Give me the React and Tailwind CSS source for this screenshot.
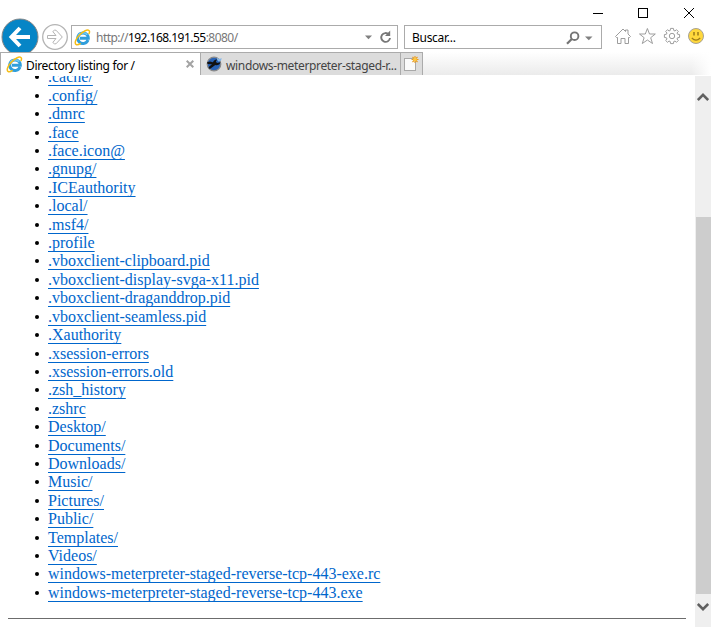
import React from "react";

const files = [
  ".cache/",
  ".config/",
  ".dmrc",
  ".face",
  ".face.icon@",
  ".gnupg/",
  ".ICEauthority",
  ".local/",
  ".msf4/",
  ".profile",
  ".vboxclient-clipboard.pid",
  ".vboxclient-display-svga-x11.pid",
  ".vboxclient-draganddrop.pid",
  ".vboxclient-seamless.pid",
  ".Xauthority",
  ".xsession-errors",
  ".xsession-errors.old",
  ".zsh_history",
  ".zshrc",
  "Desktop/",
  "Documents/",
  "Downloads/",
  "Music/",
  "Pictures/",
  "Public/",
  "Templates/",
  "Videos/",
  "windows-meterpreter-staged-reverse-tcp-443-exe.rc",
  "windows-meterpreter-staged-reverse-tcp-443.exe",
];

function IELogo({ className }) {
  return (
    <svg className={className} width="17" height="17" viewBox="0 0 17 17" fill="none">
      <path d="M14 11A5.3 5.3 0 1 1 14.3 9.3H6" stroke="#2f9edb" strokeWidth="3" />
      <path d="M13.2 5.8A5.4 5.4 0 0 0 4.2 6.8" stroke="#6fcbf5" strokeWidth="1.6" />
      <path
        d="M2.2 15.6C.2 14.4 1.6 10.3 5 6.6C8.7 2.5 13.3.2 14.9 1.5C15.9 2.3 15.4 4 14.8 5.1M2.2 15.6C3.2 16.1 5 15.4 6.6 14.3"
        stroke="#f5bd16"
        strokeWidth="1.5"
      />
    </svg>
  );
}

function TitleBar() {
  return (
    <div className="flex h-[18px] items-end justify-end pr-[17px]">
      <svg width="101" height="10" viewBox="0 0 101 10" fill="none" stroke="#000" strokeWidth="1">
        <path d="M0 5.5H10" />
        <rect x="45.5" y=".5" width="9" height="9" />
        <path d="M91 0L101 10M101 0L91 10" />
      </svg>
    </div>
  );
}

function NavBar() {
  return (
    <div className="flex h-[34px] items-start overflow-hidden">
      <svg className="ml-px shrink-0" width="38" height="38" viewBox="0 0 38 38">
        <circle cx="19" cy="19" r="18" fill="#0685c6" stroke="#858585" strokeWidth="1" />
        <path d="M29 19H11M19 10L10.5 19L19 28" fill="none" stroke="#fff" strokeWidth="4" />
      </svg>
      <svg className="ml-[3px] mt-[6px] shrink-0" width="26" height="26" viewBox="0 0 26 26" fill="none" stroke="#b4b4b4">
        <circle cx="13" cy="13" r="12.3" strokeWidth="1.3" />
        <path d="M5.5 11.5H14L10.8 7.5L12.5 6.2H14L20.3 13L14 19.8H12.5L10.8 18.5L14 14.5H5.5Z" />
      </svg>

      <div className="ml-[3px] mt-[7px] flex h-6 w-[327px] shrink-0 items-center border border-[#ababab] bg-white">
        <IELogo className="ml-[2px]" />
        <span className="ml-[5px] mt-px whitespace-nowrap text-[12px] tracking-[-0.53px] text-[#777]">
          http://<span className="text-black">192.168.191.55</span>:8080/
        </span>
        <svg className="ml-auto mr-[5px]" width="27" height="14" viewBox="0 0 27 14">
          <path d="M0 5.5H7L3.5 9.2Z" fill="#808080" />
          <path d="M23.8 4.4A4.4 4.4 0 1 0 25 8" fill="none" stroke="#777" strokeWidth="1.9" />
          <path d="M25.2 .5V6H20Z" fill="#777" />
        </svg>
      </div>

      <div className="ml-[6px] mt-[7px] flex h-6 w-[198px] shrink-0 items-center border border-[#ababab] bg-white">
        <span className="ml-[7px] mt-px text-[12px] tracking-[-0.28px] text-black">Buscar...</span>
        <svg className="ml-auto mr-[8px] mt-px" width="27" height="14" viewBox="0 0 27 14">
          <circle cx="8.6" cy="5.2" r="3.8" fill="none" stroke="#757575" strokeWidth="1.9" />
          <path d="M5.8 8L1 12.8" stroke="#757575" strokeWidth="2.2" />
          <path d="M19 5.5H26.5L22.8 9.2Z" fill="#808080" />
        </svg>
      </div>

      <svg className="ml-[12px] mt-[9px] shrink-0" width="92" height="18" viewBox="0 0 92 18" fill="none" stroke="#929292">
        <path d="M1.5 9.5L9 2L11.5 4.5V3H14V7L16.5 9.5L15.5 10.5H14.5V16.5H11V11.5H7V16.5H3.5V10.5H2.5Z" strokeWidth=".9" />
        <path d="M33.4 1.5L35.5 7H41.3L36.7 10.7L38.5 16.5L33.4 13L28.3 16.5L30.1 10.7L25.5 7H31.3Z" strokeWidth=".9" />
        <g strokeWidth=".9" transform="translate(58 9)">
          <path d="M-1.4 -7.6H1.4L1.8 -5.5L3 -5L4.5 -6.3L6.3 -4.5L5 -3L5.5 -1.8L7.6 -1.4V1.4L5.5 1.8L5 3L6.3 4.5L4.5 6.3L3 5L1.8 5.5L1.4 7.6H-1.4L-1.8 5.5L-3 5L-4.5 6.3L-6.3 4.5L-5 3L-5.5 1.8L-7.6 1.4V-1.4L-5.5 -1.8L-5 -3L-6.3 -4.5L-4.5 -6.3L-3 -5L-1.8 -5.5Z" />
          <circle r="2.7" />
        </g>
        <circle cx="82" cy="9" r="7.5" fill="#ffd83c" stroke="#a8a294" />
        <path d="M80 5V8.5M84 5V8.5" stroke="#9b7a18" strokeWidth="1.5" />
        <path d="M77.8 11Q82 15.3 86.2 11" stroke="#9b7a18" strokeWidth="1.2" />
      </svg>
    </div>
  );
}

function TabBar() {
  return (
    <div className="flex h-[23px]">
      <div className="flex w-[200px] shrink-0 items-center border-l border-t border-[#ababab] bg-white">
        <IELogo className="ml-[5px]" />
        <span className="ml-[3px] mt-[3px] whitespace-nowrap text-[12px] tracking-[-0.32px] text-black">
          Directory listing for /
        </span>
        <svg className="ml-auto mr-[6px]" width="8" height="8" viewBox="0 0 8 8">
          <path d="M.7 .7L7.3 7.3M7.3 .7L.7 7.3" stroke="#a3a3a3" strokeWidth="2" />
        </svg>
      </div>
      <div className="flex w-[200px] shrink-0 items-center border-l border-t border-[#ababab] bg-[#dcdcdc]">
        <svg className="ml-[5px] shrink-0" width="16" height="16" viewBox="0 0 16 16">
          <circle cx="8" cy="8" r="6.8" fill="#2862b5" stroke="#8a8a8a" strokeWidth="1.2" />
          <path d="M1 6.2L4 5.5L7 6.3C8 4 9.5 3.2 11.2 3.6L9.8 5.6L11 7L14.5 6.2C14 8.6 11.5 9.6 9.3 9L4.5 12.5C3 13.3 2 12 3 10.8L6 8.2L1.5 8Z" fill="#111" />
          <path d="M11.5 1.2L12.7 3L15.8 2.2L14.8 5L12.3 5.6L11 3.6Z" fill="#84b6e7" />
        </svg>
        <span className="ml-1 mt-[3px] whitespace-nowrap text-[12px] tracking-[-0.34px] text-[#444]">
          windows-meterpreter-staged-r...
        </span>
      </div>
      <div className="flex w-[23px] shrink-0 items-center border-x border-t border-[#ababab] bg-[#dcdcdc]">
        <svg className="ml-[3px] shrink-0" width="16" height="16" viewBox="0 0 16 16">
          <rect x=".5" y="2.5" width="11" height="12" fill="#fafafa" stroke="#a8a8a8" />
          <path d="M11 0V7M7.5 3.5H14.5M8.5 1L13.5 6M13.5 1L8.5 6" stroke="#e99a1c" strokeWidth="1.1" />
          <circle cx="11" cy="3.5" r="1.8" fill="#ffc83e" />
        </svg>
      </div>
      <div className="flex flex-1 bg-gradient-to-b from-white to-[#ebebeb]">
        <div className="ml-auto w-5 bg-gradient-to-r from-transparent to-white" />
      </div>
    </div>
  );
}

function Listing() {
  return (
    <main className="min-w-0 flex-1 overflow-hidden pl-2 pr-[9px] font-['Liberation_Serif',serif] text-[16px]">
      <ul className="-mt-[7.8px]">
        {files.map((name) => (
          <li key={name} className="flex h-[18.407px] items-center pl-[27px] leading-[18px]">
            <span className="mr-[9px] size-1 shrink-0 rounded-full bg-black" />
            <a className="whitespace-nowrap text-[#0066cc] underline decoration-1 underline-offset-[3px] [text-decoration-skip-ink:none]">
              {name}
            </a>
          </li>
        ))}
      </ul>
      <hr className="mt-[16px] border-t border-[#6c6c6c]" />
    </main>
  );
}

function ScrollBar() {
  return (
    <div className="flex w-4 shrink-0 flex-col bg-[#efefef]">
      <div className="flex h-[141px] justify-center pt-[16px]">
        <svg width="12" height="10" viewBox="0 0 12 10">
          <path d="M.8 8L6 2.8L11.2 8" fill="none" stroke="#606060" strokeWidth="2.6" />
        </svg>
      </div>
      <div className="ml-px h-[377px] bg-[#cdcdcd]" />
      <div className="flex justify-center pt-[8px]">
        <svg width="12" height="10" viewBox="0 0 12 10">
          <path d="M.8 2L6 7.2L11.2 2" fill="none" stroke="#606060" strokeWidth="2.6" />
        </svg>
      </div>
    </div>
  );
}

export default function App() {
  return (
    <div className="flex h-[627px] w-[711px] flex-col overflow-hidden bg-white font-['Noto_Sans',sans-serif]">
      <header className="mb-px h-[75px] shrink-0">
        <TitleBar />
        <NavBar />
        <TabBar />
      </header>
      <div className="flex min-h-0 flex-1">
        <Listing />
        <ScrollBar />
      </div>
    </div>
  );
}
